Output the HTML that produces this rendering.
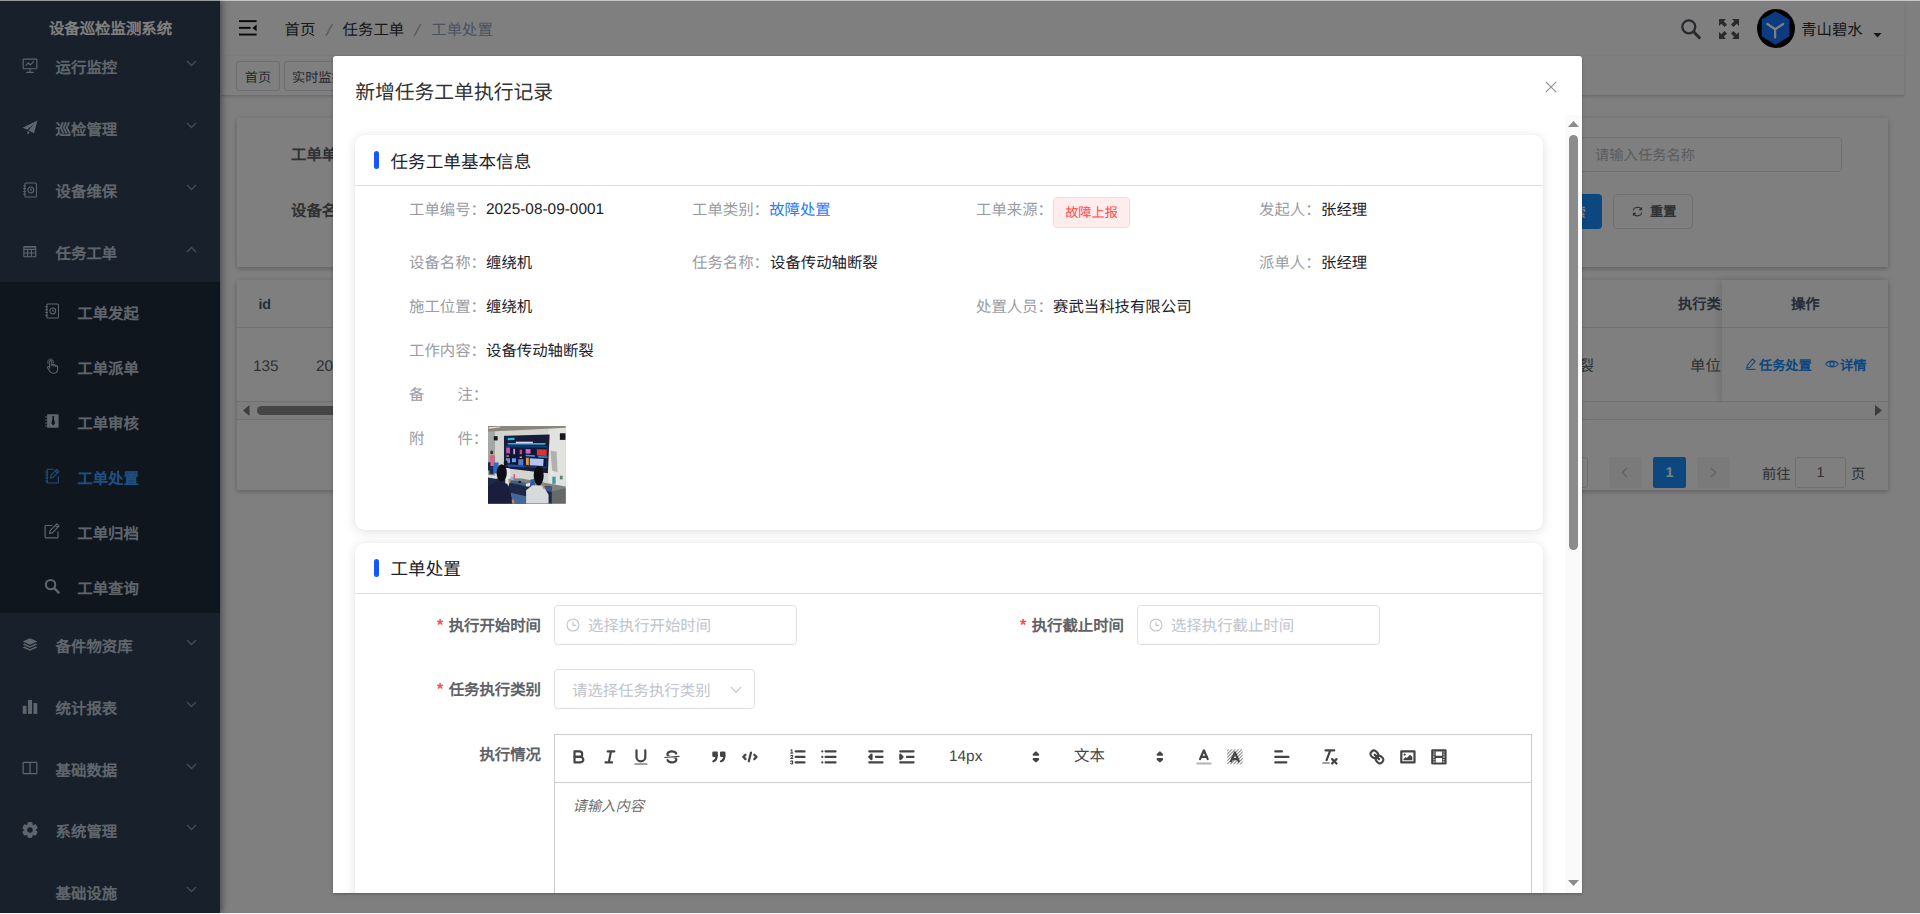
<!DOCTYPE html>
<html lang="zh-CN">
<head>
<meta charset="utf-8">
<title>设备巡检监测系统</title>
<style>
*{box-sizing:border-box;margin:0;padding:0}
html,body{width:1920px;height:914px;overflow:hidden;background:#fff}
body{font-family:"Liberation Sans",sans-serif;font-size:15.4px;color:#303133;position:relative;text-rendering:geometricPrecision}
.abs{position:absolute}
svg{display:block;overflow:visible}
.t{position:absolute;white-space:nowrap;line-height:20px;height:20px;margin-top:1px}
/* ---------- sidebar ---------- */
#side{position:absolute;left:0;top:0;width:220px;height:914px;background:#304156;box-shadow:2px 0 7px rgba(0,21,41,.45);overflow:hidden;z-index:2}
#side .logo{position:absolute;left:0;top:20.2px;width:221px;text-align:center;color:#fff;font-weight:700;font-size:15.4px;line-height:20px}
#side .mi{position:absolute;left:0;width:221px;height:62px;color:#bfcbd9;font-size:15.4px;font-weight:700}
#side .mi .tx{position:absolute;left:55.6px;top:22.7px;font-size:15.4px;line-height:20px;white-space:nowrap}
#side .mi .ic{position:absolute;left:21.5px;top:22px;width:16px;height:16px}
#side .mi .ar{position:absolute;left:186px;top:24px;width:11px;height:7px}
#side .sub{position:absolute;left:0;top:282px;width:221px;height:331px;background:#1f2d3d}
#side .si{position:absolute;left:0;width:221px;height:55px;color:#bfcbd9;font-size:15.4px;font-weight:700}
#side .si .tx{position:absolute;left:77.3px;top:19.7px;font-size:15.4px;line-height:20px;white-space:nowrap}
#side .si .ic{position:absolute;left:44px;top:17px;width:16px;height:16px}
#side .si.on{color:#409eff}
/* ---------- navbar ---------- */
#nav{position:absolute;left:221px;top:0;width:1683px;height:56px;background:#fff;box-shadow:0 1px 4px rgba(0,21,41,.08)}
#tags{position:absolute;left:221px;top:56px;width:1683px;height:40px;background:#fff;border-bottom:1px solid #d8dce5;box-shadow:0 1px 3px 0 rgba(0,0,0,.12),0 0 3px 0 rgba(0,0,0,.04)}
.tag{position:absolute;top:5px;height:30px;border:1px solid #d8dce5;border-radius:3px;font-size:13.2px;line-height:31px;color:#495060;padding:0 6.3px;white-space:nowrap;background:#fff}
#page .t{margin-top:2px}
.card{position:absolute;background:#fff;box-shadow:0 2px 5px 0 rgba(0,0,0,.2),0 0 7px 0 rgba(0,0,0,.08)}
/* ---------- overlay + dialog ---------- */
#mask{position:absolute;left:0;top:0;width:1920px;height:914px;background:rgba(0,0,0,.5);z-index:5}
#dlg{position:absolute;left:333px;top:56px;width:1249px;height:837px;background:#fff;border-radius:3px 3px 0 0;box-shadow:0 1px 3px rgba(0,0,0,.3);z-index:6;overflow:hidden}
.sec{position:absolute;left:22px;width:1188px;background:#fff;border-radius:9px;box-shadow:0 2px 12px 0 rgba(0,0,0,.12),0 0 2px rgba(0,0,0,.05)}
.sec .bar{position:absolute;left:18.8px;width:5px;height:18px;border-radius:2.5px;background:#1557ff;margin-top:-1px}
.sec .ttl{position:absolute;left:35.5px;margin-top:.5px;font-size:17.6px;line-height:24px;color:#1f2329;white-space:nowrap}
.sec .hr{position:absolute;left:0;width:1188px;height:1px;background:#dedfe2}
.lb,.vl,.lk{margin-top:2px}
.lb{color:#999ca3}
.vl{color:#1d2129}
.lk{color:#2a7afb}
.fl{position:absolute;font-weight:700;color:#606266;line-height:20px;text-align:right;white-space:nowrap;width:200px}
.fl{margin-top:1.6px}
.fl i{display:inline-block;vertical-align:top;height:20px;color:#ff4949;font-style:normal;margin-right:5px;font-weight:700;font-size:16px;line-height:20px;position:relative;top:-.6px;left:-.5px}
.inp{position:absolute;height:40px;border:1px solid #dcdfe6;border-radius:4px;background:#fff;color:#c0c4cc;line-height:38px;white-space:nowrap}
</style>
</head>
<body>

<!-- ================= BACKGROUND PAGE ================= -->
<div id="nav">
  <svg class="abs" style="left:18.3px;top:20.2px;width:18px;height:16px" viewBox="0 0 18 16"><g fill="#111"><rect x="0" y="0.2" width="17.6" height="1.9"/><rect x="0" y="6.9" width="11.6" height="1.9"/><rect x="0" y="13.6" width="17.6" height="1.9"/><path d="M17.6 4.6 V11.2 L13.4 7.9 Z"/></g></svg>
  <span class="t" style="left:63.6px;top:20px;font-size:15.4px;color:#303133">首页</span>
  <svg class="abs" style="left:0;top:0;width:300px;height:56px" viewBox="0 0 300 56"><path d="M105 35.9 L111.5 23.8 M193.2 35.9 L199.7 23.8" stroke="#b4b8c0" stroke-width="1.5" fill="none"/></svg>
  <span class="t" style="left:121.6px;top:20px;font-size:15.4px;color:#303133">任务工单</span>
  
  <span class="t" style="left:210.3px;top:20px;font-size:15.4px;color:#97a8be">工单处置</span>
  <!-- right menu -->
  <svg class="abs" style="left:1459px;top:18px;width:22px;height:23px" viewBox="0 0 22 23"><circle cx="8.8" cy="8.8" r="6.5" fill="none" stroke="#50545c" stroke-width="2.3"/><path d="M13.6 13.8 L19.3 19.6" stroke="#50545c" stroke-width="3" stroke-linecap="round"/></svg>
  <svg class="abs" style="left:1498px;top:19px;width:20px;height:20px" viewBox="0 0 20 20"><g fill="#50545c"><path d="M0 0 H7 L4.7 2.3 L8 5.6 L5.6 8 L2.3 4.7 L0 7 Z"/><path d="M20 0 V7 L17.7 4.7 L14.4 8 L12 5.6 L15.3 2.3 L13 0 Z"/><path d="M0 20 V13 L2.3 15.3 L5.6 12 L8 14.4 L4.7 17.7 L7 20 Z"/><path d="M20 20 H13 L15.3 17.7 L12 14.4 L14.4 12 L17.7 15.3 L20 13 Z"/></g></svg>
  <svg class="abs" style="left:1536px;top:8.6px;width:38px;height:39px" viewBox="0 0 39 39" preserveAspectRatio="none"><circle cx="19.5" cy="19.5" r="19.5" fill="#000"/><path d="M19 2.4 L33.4 10.6 V27.2 L19 35.8 L4.8 27.2 V10.6 Z" fill="#1878ff"/><path d="M18.6 28.6 V20.3 M18.6 20.3 L10.6 15 M18.6 20.3 L26.8 15" stroke="#fff" stroke-width="2.3" fill="none" stroke-linecap="round"/></svg>
  <span class="t" style="left:1580.2px;top:20.3px;font-size:15.4px;color:#303133">青山碧水</span>
  <svg class="abs" style="left:1652px;top:33.4px;width:9px;height:5px" viewBox="0 0 9 5"><path d="M0.5 0 H8.5 L4.5 4.6 Z" fill="#303133"/></svg>
</div>
<div id="tags">
  <div class="tag" style="left:15.3px;padding:0 7.6px 0 7.5px">首页</div>
  <div class="tag" style="left:63px;padding-left:7px">实时监控</div>
</div>
<div id="page">
  <!-- search card -->
  <div class="card" style="left:237px;top:118px;width:1651px;height:149px">
    <span class="t" style="left:54px;top:26px;font-weight:700;color:#606266">工单单号</span>
    <span class="t" style="left:54px;top:82px;font-weight:700;color:#606266">设备名称</span>
    <div class="abs" style="left:1320px;top:19px;width:285px;height:35px;border:1px solid #dcdfe6;border-radius:4px"></div>
    <span class="t" style="left:1358px;top:25.8px;font-size:14.3px;color:#b4b8bf">请输入任务名称</span>
    <div class="abs" style="left:1280px;top:76px;width:85px;height:35px;background:#1890ff;border-radius:4px"></div>
    <span class="t" style="left:1322px;top:83px;font-size:13.2px;color:#fff;font-weight:700">搜索</span>
    <div class="abs" style="left:1376px;top:76px;width:80px;height:35px;border:1px solid #dcdfe6;border-radius:4px;background:#fff"></div>
    <svg class="abs" style="left:1395px;top:88px;width:11px;height:11px" viewBox="0 0 11 11"><g fill="none" stroke="#606266" stroke-width="1.1"><path d="M1.2 4.4 A4.5 4.5 0 0 1 9.4 3.4 M9.8 6.6 A4.5 4.5 0 0 1 1.6 7.6"/><path d="M9.6 1.2 V3.6 H7.2 M1.4 9.8 V7.4 H3.8"/></g></svg>
    <span class="t" style="left:1413px;top:82.3px;font-size:13.2px;color:#606266;font-weight:700">重置</span>
  </div>
  <!-- table card -->
  <div class="card" style="left:237px;top:280px;width:1651px;height:210px">
    <div class="abs" style="left:0;top:47px;width:1651px;height:1px;background:#dfe6ec"></div>
    <span class="t" style="left:21.4px;top:13.2px;font-size:14.3px;font-weight:700;color:#515a6e">id</span>
    <span class="t" style="left:1441px;top:13px;font-size:14.3px;font-weight:700;color:#515a6e">执行类别</span>
    <span class="t" style="left:16px;top:74.6px;font-size:15.4px;color:#606266">135</span>
    <span class="t" style="left:79px;top:74.6px;font-size:15.4px;color:#606266">2025</span>
    <span class="t" style="left:1326px;top:75px;font-size:15.4px;color:#606266">断裂</span>
    <span class="t" style="left:1453px;top:75px;font-size:15.4px;color:#606266">单位</span>
    <div class="abs" style="left:0;top:121px;width:1651px;height:1px;background:#dfe6ec"></div>
    <!-- fixed right col -->
    <div class="abs" style="left:1485px;top:0;width:166px;height:122px;background:#fff;box-shadow:-3px 0 8px rgba(0,0,0,.12);border-bottom:1px solid #dfe6ec"></div>
    <div class="abs" style="left:1485px;top:47px;width:166px;height:1px;background:#dfe6ec"></div>
    <span class="t" style="left:1554px;top:13px;font-size:14.3px;font-weight:700;color:#515a6e">操作</span>
    <svg class="abs" style="left:1508px;top:78px;width:12px;height:12px" viewBox="0 0 12 12"><g fill="none" stroke="#1890ff" stroke-width="1.1"><path d="M7.6 1 L10 3.4 L4.6 9.6 L1.8 10 L2.4 7.2 Z"/><path d="M1.2 11.4 H10.6"/></g></svg>
    <span class="t" style="left:1522px;top:74px;font-size:13.2px;color:#1890ff;font-weight:700">任务处置</span>
    <svg class="abs" style="left:1588px;top:79px;width:14px;height:10px" viewBox="0 0 14 10"><g fill="none" stroke="#1890ff" stroke-width="1.1"><path d="M0.8 5 C3 1.2 11 1.2 13.2 5 C11 8.8 3 8.8 0.8 5 Z"/><circle cx="7" cy="5" r="2.1"/></g></svg>
    <span class="t" style="left:1603px;top:74px;font-size:13.2px;color:#1890ff;font-weight:700">详情</span>
    <!-- h scrollbar -->
    <div class="abs" style="left:0;top:122px;width:1651px;height:17px;background:#fbfbfb"></div>
    <svg class="abs" style="left:5.5px;top:125px;width:6.5px;height:11px" viewBox="0 0 6 9" preserveAspectRatio="none"><path d="M6 0 V9 L0 4.5 Z" fill="#787878"/></svg>
    <div class="abs" style="left:20px;top:126px;width:1200px;height:9px;border-radius:5px;background:#8a8a8a"></div>
    <svg class="abs" style="left:1638px;top:125px;width:7px;height:11px" viewBox="0 0 7 11"><path d="M0 0 V11 L7 5.5 Z" fill="#787878"/></svg>
    <div class="abs" style="left:0;top:139px;width:1651px;height:1px;background:#dfe6ec"></div>
    <!-- pagination -->
    <div class="abs" style="left:1269px;top:177px;width:82px;height:31px;border:1px solid #dcdfe6;border-radius:3px"></div>
    <div class="abs" style="left:1372px;top:177px;width:33px;height:31px;background:#f4f4f5;border-radius:2px"></div>
    <svg class="abs" style="left:1384px;top:187px;width:7px;height:11px" viewBox="0 0 7 11"><path d="M6 1 L1.4 5.5 L6 10" fill="none" stroke="#c0c4cc" stroke-width="1.4"/></svg>
    <div class="abs" style="left:1416px;top:177px;width:33px;height:31px;background:#1890ff;border-radius:2px;color:#fff;font-weight:700;font-size:14.3px;text-align:center;line-height:33px">1</div>
    <div class="abs" style="left:1460px;top:177px;width:33px;height:31px;background:#f4f4f5;border-radius:2px"></div>
    <svg class="abs" style="left:1473px;top:187px;width:7px;height:11px" viewBox="0 0 7 11"><path d="M1 1 L5.6 5.5 L1 10" fill="none" stroke="#c0c4cc" stroke-width="1.4"/></svg>
    <span class="t" style="left:1525px;top:183px;font-size:14.3px;color:#606266">前往</span>
    <div class="abs" style="left:1558px;top:177px;width:51px;height:31px;border:1px solid #dcdfe6;border-radius:3px;text-align:center;line-height:31px;font-size:14.3px;color:#606266">1</div>
    <span class="t" style="left:1614px;top:183px;font-size:14.3px;color:#606266">页</span>
  </div>
</div>
<div id="side">
  <div class="logo">设备巡检监测系统</div>
  <div class="mi" style="top:36px"><svg class="ic" viewBox="0 0 17 17"><g fill="none" stroke="currentColor" stroke-width="1.2"><rect x="1.2" y="1.2" width="14.6" height="10.2" rx="0.8"/><path d="M4 8 L6.7 5.2 L8.8 7.3 L12.6 3.6"/><path d="M8.5 11.4 V15 M4.6 15.3 H12.4"/></g></svg><span class="tx">运行监控</span><svg class="ar" viewBox="0 0 11 7"><path d="M1 1 L5.5 5.5 L10 1" fill="none" stroke="#8b97a6" stroke-width="1.3"/></svg></div>
  <div class="mi" style="top:98px"><svg class="ic" viewBox="0 0 17 17"><path d="M16.4 0.6 L0.6 8.2 L5.6 10.3 L12.6 4.2 L7 11.2 L12.8 14 Z M5.8 11.6 L5.8 15.8 L8.4 12.9 Z" fill="currentColor"/></svg><span class="tx">巡检管理</span><svg class="ar" viewBox="0 0 11 7"><path d="M1 1 L5.5 5.5 L10 1" fill="none" stroke="#8b97a6" stroke-width="1.3"/></svg></div>
  <div class="mi" style="top:160px"><svg class="ic" viewBox="0 0 17 17"><g fill="none" stroke="currentColor" stroke-width="1.1"><rect x="3" y="1" width="12.4" height="15" rx="1.2"/><circle cx="9.3" cy="8.5" r="3.1"/><path d="M9.3 6.8 V8.6 H10.8"/><path d="M1.3 4 H4.2 M1.3 7 H4.2 M1.3 10 H4.2 M1.3 13 H4.2" stroke-width="1"/></g></svg><span class="tx">设备维保</span><svg class="ar" viewBox="0 0 11 7"><path d="M1 1 L5.5 5.5 L10 1" fill="none" stroke="#8b97a6" stroke-width="1.3"/></svg></div>
  <div class="mi" style="top:222px"><svg class="ic" viewBox="0 0 17 17"><g fill="none" stroke="currentColor" stroke-width="1.2"><rect x="2" y="2.6" width="12.6" height="11" rx="0.8"/><path d="M2 5.7 H14.6 M2 9.6 H14.6 M5.95 5.7 V13.6 M10.05 5.7 V13.6"/><path d="M2 3.2 H14.6" stroke-width="1.3"/></g></svg><span class="tx">任务工单</span><svg class="ar" viewBox="0 0 11 7"><path d="M1 6 L5.5 1.5 L10 6" fill="none" stroke="#8b97a6" stroke-width="1.3"/></svg></div>
  <div class="sub"></div>
  <div class="si" style="top:285.5px"><svg class="ic" viewBox="0 0 17 17"><g fill="none" stroke="currentColor" stroke-width="1.1"><rect x="3" y="1" width="12.4" height="15" rx="1.2"/><circle cx="9.3" cy="8.5" r="3.1"/><path d="M9.3 6.8 V8.6 H10.8"/><path d="M1.3 4 H4.2 M1.3 7 H4.2 M1.3 10 H4.2 M1.3 13 H4.2" stroke-width="1"/></g></svg><span class="tx">工单发起</span></div>
  <div class="si" style="top:340.5px"><svg class="ic" viewBox="0 0 16 16"><g fill="none" stroke="currentColor" stroke-width="1.05" stroke-linecap="round" stroke-linejoin="round"><path d="M5.6 9.2 V3.6 a1.1 1.1 0 0 1 2.2 0 V7.6"/><path d="M7.8 7.2 a1 1 0 0 1 2 0 V8.2 M9.8 7.8 a1 1 0 0 1 2 0 V8.8 M11.8 8.6 a0.9 0.9 0 0 1 1.8 0 V11.6 c0 2.2 -1.4 3.6 -3.6 3.6 H9 c-1.6 0 -2.6 -0.8 -3.4 -2.2 L3.6 9.8 c-0.5 -1 0.8 -1.8 1.5 -0.9 L5.6 10"/><path d="M3.9 5.4 a3 3 0 1 1 5.6 -0.6" stroke-width="0.9"/></g></svg><span class="tx">工单派单</span></div>
  <div class="si" style="top:395.5px"><svg class="ic" viewBox="0 0 16 16"><path d="M3.2 1.2 H13.6 a1 1 0 0 1 1 1 V13.8 a1 1 0 0 1 -1 1 H3.2 Z" fill="currentColor"/><path d="M1.2 4 H4 M1.2 7 H4 M1.2 10 H4 M1.2 13 H4" stroke="currentColor" stroke-width="1.1"/><path d="M8 3.2 H10.4 L9.9 5 L11 10.6 L9.2 12.6 L7.4 10.6 L8.5 5 Z" fill="#1f2d3d"/></svg><span class="tx">工单审核</span></div>
  <div class="si on" style="top:450.5px"><svg class="ic" viewBox="0 0 16 16"><g fill="none" stroke="currentColor" stroke-width="1.1" stroke-linejoin="round"><path d="M14.4 8.6 V14 a1 1 0 0 1 -1 1 H3.2 V1.2 H9.8"/><path d="M1.2 4 H4.2 M1.2 7 H4.2 M1.2 10 H4.2 M1.2 13 H4.2" stroke-width="1"/><path d="M12.6 1.4 L14.8 3.6 L9 9.4 L6.4 10 L7 7.2 Z M11.3 2.8 L13.4 4.9"/></g></svg><span class="tx">工单处置</span></div>
  <div class="si" style="top:505.5px"><svg class="ic" viewBox="0 0 16 16"><g fill="none" stroke="currentColor" stroke-width="1.2" stroke-linejoin="round"><path d="M14 8.4 V14 a0.9 0.9 0 0 1 -0.9 0.9 H2 a0.9 0.9 0 0 1 -0.9 -0.9 V3.4 a0.9 0.9 0 0 1 0.9 -0.9 H8.4"/><path d="M12.8 0.9 L15 3.1 L8.4 9.8 L5.6 10.4 L6.2 7.6 Z M11.4 2.3 L13.6 4.5"/></g></svg><span class="tx">工单归档</span></div>
  <div class="si" style="top:560.5px"><svg class="ic" viewBox="0 0 16 16"><circle cx="6.6" cy="6.6" r="4.7" fill="none" stroke="currentColor" stroke-width="2"/><path d="M10.2 10.2 L14.6 14.6" stroke="currentColor" stroke-width="2.4" stroke-linecap="round"/></svg><span class="tx">工单查询</span></div>
  <div class="mi" style="top:615px"><svg class="ic" viewBox="0 0 17 17"><g fill="currentColor"><path d="M8.5 1.2 L16.3 4.7 L8.5 8.2 L0.7 4.7 Z"/><path d="M2.6 7 L0.7 7.9 L8.5 11.4 L16.3 7.9 L14.4 7 L8.5 9.7 Z"/><path d="M2.6 10.2 L0.7 11.1 L8.5 14.6 L16.3 11.1 L14.4 10.2 L8.5 12.9 Z"/></g></svg><span class="tx">备件物资库</span><svg class="ar" viewBox="0 0 11 7"><path d="M1 1 L5.5 5.5 L10 1" fill="none" stroke="#8b97a6" stroke-width="1.3"/></svg></div>
  <div class="mi" style="top:677px"><svg class="ic" viewBox="0 0 17 17"><g fill="currentColor"><rect x="0.8" y="7.2" width="4" height="8.6"/><rect x="6.4" y="1" width="4.2" height="14.8"/><rect x="12.2" y="4.4" width="4" height="11.4"/></g></svg><span class="tx">统计报表</span><svg class="ar" viewBox="0 0 11 7"><path d="M1 1 L5.5 5.5 L10 1" fill="none" stroke="#8b97a6" stroke-width="1.3"/></svg></div>
  <div class="mi" style="top:739px"><svg class="ic" style="margin-top:-1.3px" viewBox="0 0 17 17"><g fill="none" stroke="currentColor" stroke-width="1.3"><rect x="1.2" y="2.6" width="14.6" height="11.8" rx="0.8"/><path d="M8.5 2.6 V14.4"/></g></svg><span class="tx">基础数据</span><svg class="ar" viewBox="0 0 11 7"><path d="M1 1 L5.5 5.5 L10 1" fill="none" stroke="#8b97a6" stroke-width="1.3"/></svg></div>
  <div class="mi" style="top:800px"><svg class="ic" viewBox="0 0 17 17"><g fill="currentColor"><circle cx="8.5" cy="8.5" r="6"/><rect x="5.7" y="0.1" width="5.6" height="5" rx="2" transform="rotate(0 8.5 8.5)"/><rect x="5.7" y="0.1" width="5.6" height="5" rx="2" transform="rotate(60 8.5 8.5)"/><rect x="5.7" y="0.1" width="5.6" height="5" rx="2" transform="rotate(120 8.5 8.5)"/><rect x="5.7" y="0.1" width="5.6" height="5" rx="2" transform="rotate(180 8.5 8.5)"/><rect x="5.7" y="0.1" width="5.6" height="5" rx="2" transform="rotate(240 8.5 8.5)"/><rect x="5.7" y="0.1" width="5.6" height="5" rx="2" transform="rotate(300 8.5 8.5)"/></g><circle cx="8.5" cy="8.5" r="2.9" fill="#304156"/></svg><span class="tx">系统管理</span><svg class="ar" viewBox="0 0 11 7"><path d="M1 1 L5.5 5.5 L10 1" fill="none" stroke="#8b97a6" stroke-width="1.3"/></svg></div>
  <div class="mi" style="top:862px"><span class="tx">基础设施</span><svg class="ar" viewBox="0 0 11 7"><path d="M1 1 L5.5 5.5 L10 1" fill="none" stroke="#8b97a6" stroke-width="1.3"/></svg></div>
</div>

<!-- ================= OVERLAY ================= -->
<div id="mask"></div>

<!-- ================= DIALOG ================= -->
<div id="dlg">
<div class="abs" style="left:-333px;top:-56px;width:1920px;height:914px">
<span class="t" style="left:355.2px;top:78px;font-size:19.8px;line-height:28px;height:28px;color:#303133">新增任务工单执行记录</span>
<svg class="abs" style="left:1545px;top:81px;width:12px;height:12px" viewBox="0 0 12 12"><path d="M0.8 0.8 L11.2 11.2 M11.2 0.8 L0.8 11.2" stroke="#909399" stroke-width="1.2" fill="none"/></svg>
<!--SEC1-->
<div class="sec" style="left:355px;top:135px;height:395px"><div class="bar" style="top:17px"></div><div class="ttl" style="top:14px">任务工单基本信息</div><div class="hr" style="top:50px"></div></div>
<span class="t lb" style="left:409px;top:199px;">工单编号：</span>
<span class="t lb" style="left:692px;top:199px;">工单类别：</span>
<span class="t lb" style="left:976px;top:199px;">工单来源：</span>
<span class="t lb" style="left:1259px;top:199px;">发起人：</span>
<span class="t lb" style="left:409px;top:252px;">设备名称：</span>
<span class="t lb" style="left:692px;top:252px;">任务名称：</span>
<span class="t lb" style="left:1259px;top:252px;">派单人：</span>
<span class="t lb" style="left:409px;top:296px;">施工位置：</span>
<span class="t lb" style="left:976px;top:296px;">处置人员：</span>
<span class="t lb" style="left:409px;top:340px;">工作内容：</span>
<span class="t lb" style="left:409px;top:384px;">备</span>
<span class="t lb" style="left:457.4px;top:384px;">注：</span>
<span class="t lb" style="left:409px;top:428px;">附</span>
<span class="t lb" style="left:457.4px;top:428px;">件：</span>
<span class="t vl" style="left:486px;top:198px;">2025-08-09-0001</span>
<span class="t lk" style="left:769.2px;top:199px;">故障处置</span>
<span class="t vl" style="left:1321px;top:199px;">张经理</span>
<span class="t vl" style="left:486px;top:252px;">缠绕机</span>
<span class="t vl" style="left:770px;top:252px;">设备传动轴断裂</span>
<span class="t vl" style="left:1321px;top:252px;">张经理</span>
<span class="t vl" style="left:486px;top:296px;">缠绕机</span>
<span class="t vl" style="left:1053px;top:296px;">赛武当科技有限公司</span>
<span class="t vl" style="left:486px;top:340px;">设备传动轴断裂</span>
<div class="abs" style="left:1053px;top:197px;width:77px;height:31px;border:1px solid #ffd6d6;background:#ffeded;border-radius:4px;color:#ff4949;font-size:13.2px;line-height:29px;text-align:center;white-space:nowrap">故障上报</div>
<div id="photo" class="abs" style="left:488px;top:426px;width:78px;height:78px;background:#9aa0a6;overflow:hidden"><svg viewBox="0 0 78 78" width="78" height="78" style="display:block"><defs><filter id="pb" x="-5%" y="-5%" width="110%" height="110%"><feGaussianBlur stdDeviation="0.45"/></filter><linearGradient id="scr" x1="0" y1="0" x2="1" y2="1"><stop offset="0" stop-color="#16203f"/><stop offset="1" stop-color="#1d1b2c"/></linearGradient></defs><g filter="url(#pb)"><rect x="-2" y="-2" width="82" height="82" fill="#d2d4d0"/><rect x="-2" y="-2" width="9" height="60" fill="#a3a7a6"/><polygon points="60.56,3.14 77.61,1.35 77.61,60.56 60.56,56.97" fill="#e2e3df"/><polygon points="0,0 77.61,0 77.61,1.79 24.67,4.49 0,5.38" fill="#8a8679"/><polygon points="0.45,1.35 12.11,0.45 12.56,1.35 0.63,2.69" fill="#e8e8e0"/><polygon points="0,51.59 33.64,52.49 60.56,57.42 77.61,60.56 77.61,77.61 0,77.61" fill="#7e837e"/><polygon points="60.56,65.94 77.61,62.35 77.61,77.61 62.35,77.61" fill="#656a68"/><polygon points="15.97,9.87 61.64,8.52 59.84,47.28 15.97,41.9" fill="url(#scr)"/><polygon points="17.94,19.29 59.66,19.74 58.77,42.62 17.94,39.92" fill="#17386f"/><polygon points="18.57,21.26 58.94,21.8 58.23,40.82 18.57,38.31" fill="#10183a"/><polygon points="19.29,17.05 57.87,17.05 56.97,18.84 20.19,18.57" fill="#27b0e6"/><polygon points="19.74,12.11 26.47,11.66 26.47,14.09 19.74,14.35" fill="#2fb6e0"/><polygon points="27.81,15.7 44.86,15.7 44.86,17.32 27.81,17.32" fill="#d9d7f0"/><polygon points="18.21,21.53 21.98,21.53 21.98,27.36 18.21,27.36" fill="#d24aa0"/><polygon points="25.39,22.88 27.01,22.88 27.01,28.26 25.39,28.26" fill="#e5a0d8"/><polygon points="31.67,23.6 34,23.6 34,28.26 31.67,28.26" fill="#e0407a"/><polygon points="37.68,22.88 42.62,23.33 42.44,27.81 37.68,27.54" fill="#e45ec4"/><polygon points="48.9,23.33 58.77,23.6 58.59,30.06 48.9,29.61" fill="#d8342f"/><polygon points="37.68,28.71 46.92,29.16 46.92,30.77 37.68,30.24" fill="#2aa5e2"/><polygon points="50.24,30.06 59.48,30.5 59.48,31.85 50.24,31.49" fill="#2aa5e2"/><polygon points="41.72,32.3 55.63,32.93 55.18,39.92 41.72,39.21" fill="#b9c4ee"/><polygon points="37.95,31.67 40.82,31.85 40.82,39.21 37.95,38.85" fill="#e29a3a"/><polygon points="18.57,29.34 20.9,29.34 20.9,30.77 18.57,30.77" fill="#e29a3a"/><polygon points="31.67,30.5 34,30.5 34,32.03 31.67,32.03" fill="#e29a3a"/><polygon points="17.94,32.3 21.98,32.3 21.98,37.23 17.94,37.23" fill="#6f93d6"/><polygon points="23.95,32.3 27.9,32.3 27.9,36.16 23.95,36.16" fill="#6aa5e4"/><polygon points="30.24,33.2 35.26,33.2 35.26,39.48 30.24,39.03" fill="#5b78c4"/><polygon points="20.19,38.58 36.34,39.48 36.34,41.27 20.19,40.64" fill="#1e4fb0"/><rect x="5.83" y="10.14" width="3.8" height="4.3" fill="#17181c"/><rect x="71.86" y="7.27" width="5.6" height="6.6" fill="#15161a"/><polygon points="62.35,24.67 68.63,25.57 69.53,46.2 64.15,44.41" fill="#9b9c98" opacity=".7"/><rect x="64.33" y="50.69" width="3.3" height="7.2" fill="#3d97a6"/><rect x="71.86" y="49.79" width="2.8" height="3.6" fill="#5e7f74"/><rect x="1.53" y="29.16" width="5.6" height="11.2" rx="1.5" fill="#c86f8a"/><ellipse cx="3.68" cy="26.47" rx="1.4" ry="1.9" fill="#3a2c28"/><rect x="1.35" y="39.92" width="4.3" height="8.4" fill="#1f2c56"/><rect x="5.83" y="36.52" width="4.8" height="11" fill="#2f6cc0"/><rect x="0" y="36.34" width="2.4" height="8" fill="#22253a"/><polygon points="0,50.69 24.67,55.18 39.92,59.66 63.7,60.56 63.7,77.61 0,77.61" fill="#1b2944"/><polygon points="21.98,53.83 40.82,57.42 39.03,60.56 22.88,56.97" fill="#3f5f90"/><polygon points="22.88,66.84 39.03,70.43 38.13,77.61 22.88,77.61" fill="#44689a"/><polygon points="55.18,60.56 63.7,61.01 63.7,65.94 56.07,64.6" fill="#3a5a8c"/><polygon points="0,48.9 8.52,50.24 8.97,52.93 0,51.59" fill="#dfe3e8"/><polygon points="17.94,41.72 21.8,42.62 22.88,52.49 20.19,60.56 17.05,59.66" fill="#e4e6e6"/><ellipse cx="17.67" cy="36.87" rx="2" ry="2.6" fill="#14151a"/><polygon points="20.19,52.93 22.88,52.49 22.43,56.97 20.64,56.52" fill="#b98a6c"/><rect x="22.7" y="50.69" width="3" height="3.6" fill="#7fb7e8"/><rect x="25.57" y="48.18" width="1.4" height="4.6" fill="#e2505a"/><ellipse cx="31.67" cy="56.07" rx="1.5" ry="1.2" fill="#18203a"/><polygon points="42.62,53.38 46.65,52.93 46.92,59.66 41.72,60.11" fill="#3656a8"/><polygon points="37.68,57.87 42.17,56.97 41.72,60.56 38.13,60.56" fill="#e9eaee"/><polygon points="0,60.56 9.42,55.18 19.29,57.87 24.67,74.91 24.67,77.61 0,77.61" fill="#1a1f3e"/><ellipse cx="13.73" cy="46.92" rx="5.1" ry="8.6" fill="#101114"/><polygon points="23.78,73.12 26.02,74.02 26.47,77.61 23.95,77.61" fill="#c08a5e"/><polygon points="38.13,64.15 44.41,59.21 55.18,59.66 60.56,68.63 60.56,77.61 38.13,77.61" fill="#d6dadb"/><ellipse cx="50.69" cy="49.61" rx="5" ry="9.6" fill="#0f1013"/><polygon points="54.46,56.97 56.52,57.42 56.52,63.25 54.73,61.91" fill="#b8825c"/></g></svg></div>
<!--SEC2-->
<div class="sec" style="left:355px;top:543px;height:420px"><div class="bar" style="top:17px"></div><div class="ttl" style="top:13px">工单处置</div><div class="hr" style="top:50px"></div></div>
<span class="fl" style="left:341px;top:615px"><i>*</i>执行开始时间</span>
<span class="fl" style="left:924px;top:615px"><i>*</i>执行截止时间</span>
<span class="fl" style="left:341px;top:679px"><i>*</i>任务执行类别</span>
<span class="fl" style="left:341px;top:744px">执行情况</span>
<div class="inp" style="left:554px;top:605px;width:243px"></div>
<svg class="abs" style="left:566px;top:618px;width:14px;height:14px" viewBox="0 0 14 14"><g fill="none" stroke="#c0c4cc" stroke-width="1.1"><circle cx="7" cy="7" r="6"/><path d="M7 3.6 V7.4 H10"/></g></svg>
<span class="t " style="left:588px;top:615px;color:#c0c4cc;margin-top:2px">选择执行开始时间</span>
<div class="inp" style="left:1137px;top:605px;width:243px"></div>
<svg class="abs" style="left:1149px;top:618px;width:14px;height:14px" viewBox="0 0 14 14"><g fill="none" stroke="#c0c4cc" stroke-width="1.1"><circle cx="7" cy="7" r="6"/><path d="M7 3.6 V7.4 H10"/></g></svg>
<span class="t " style="left:1171px;top:615px;color:#c0c4cc;margin-top:2px">选择执行截止时间</span>
<div class="inp" style="left:554px;top:669px;width:201px"></div>
<span class="t " style="left:572px;top:680px;color:#c0c4cc;margin-top:2px">请选择任务执行类别</span>
<svg class="abs" style="left:730px;top:686px;width:12px;height:8px" viewBox="0 0 12 8"><path d="M1 1.2 L6 6.4 L11 1.2" fill="none" stroke="#c0c4cc" stroke-width="1.2"/></svg>
<div class="abs" style="left:554px;top:734px;width:978px;height:49px;border:1px solid #ccc;background:#fff"></div>
<div class="abs" style="left:554px;top:782px;width:978px;height:200px;border:1px solid #ccc;background:#fff"></div>
<span class="t " style="left:572.5px;top:796px;color:rgba(0,0,0,.6);font-style:italic;font-size:14.3px">请输入内容</span>
<svg class="abs" style="left:569.1px;top:747.1px;width:19.8px;height:19.8px" viewBox="0 0 18 18"><path fill="none" stroke="#444" stroke-width="2" stroke-linecap="round" stroke-linejoin="round" d="M5,4H9.5A2.5,2.5,0,0,1,12,6.5v0A2.5,2.5,0,0,1,9.5,9H5V4Z"/><path fill="none" stroke="#444" stroke-width="2" stroke-linecap="round" stroke-linejoin="round" d="M5,9h5.5A2.5,2.5,0,0,1,13,11.5v0A2.5,2.5,0,0,1,10.5,14H5V9Z"/></svg>
<svg class="abs" style="left:600.4px;top:747.1px;width:19.8px;height:19.8px" viewBox="0 0 18 18"><path fill="none" stroke="#444" stroke-width="2" stroke-linecap="round" stroke-linejoin="round" d="M7 4H13M5 14H11M8 14L10 4"/></svg>
<svg class="abs" style="left:631.1px;top:747.1px;width:19.8px;height:19.8px" viewBox="0 0 18 18"><path fill="none" stroke="#444" stroke-width="2" stroke-linecap="round" stroke-linejoin="round" d="M5,3V9a4.012,4.012,0,0,0,4,4H9a4.012,4.012,0,0,0,4-4V3"/><rect fill="#444" height="1" rx="0.5" ry="0.5" width="12" x="3" y="15"/></svg>
<svg class="abs" style="left:662.1px;top:747.1px;width:19.8px;height:19.8px" viewBox="0 0 18 18"><line fill="none" stroke="#444" stroke-width="1" stroke-linecap="round" stroke-linejoin="round" x1="15.5" x2="2.5" y1="8.5" y2="9.5"/><path fill="#444" d="M9.007,8C6.542,7.791,6,7.519,6,6.5,6,5.792,7.283,5,9,5c1.571,0,2.765.679,2.969,1.309a1,1,0,0,0,1.9-.617C13.356,4.106,11.354,3,9,3,6.2,3,4,4.538,4,6.5a3.2,3.2,0,0,0,.5,1.843Z"/><path fill="#444" d="M8.984,10C11.457,10.208,12,10.479,12,11.5c0,0.708-1.283,1.5-3,1.5-1.571,0-2.765-.679-2.969-1.309a1,1,0,1,0-1.9.617C4.644,13.894,6.646,15,9,15c2.8,0,5-1.538,5-3.5a3.2,3.2,0,0,0-.5-1.843Z"/></svg>
<svg class="abs" style="left:709.1px;top:747.1px;width:19.8px;height:19.8px" viewBox="0 0 18 18"><rect fill="#444" stroke="#444" stroke-width="2" stroke-linecap="round" stroke-linejoin="round" height="3" width="3" x="4" y="5"/><rect fill="#444" stroke="#444" stroke-width="2" stroke-linecap="round" stroke-linejoin="round" height="3" width="3" x="11" y="5"/><path fill="#444" stroke="#444" stroke-width="2" stroke-linecap="round" stroke-linejoin="round" fill-rule="evenodd" d="M7,8c0,4.031-3,5-3,5"/><path fill="#444" stroke="#444" stroke-width="2" stroke-linecap="round" stroke-linejoin="round" fill-rule="evenodd" d="M14,8c0,4.031-3,5-3,5"/></svg>
<svg class="abs" style="left:740.1px;top:747.1px;width:19.8px;height:19.8px" viewBox="0 0 18 18"><polyline fill="none" stroke="#444" stroke-width="2" stroke-linecap="round" stroke-linejoin="round" points="5 7 3 9 5 11"/><polyline fill="none" stroke="#444" stroke-width="2" stroke-linecap="round" stroke-linejoin="round" points="13 7 15 9 13 11"/><line fill="none" stroke="#444" stroke-width="2" stroke-linecap="round" stroke-linejoin="round" x1="10" x2="8" y1="5" y2="13"/></svg>
<svg class="abs" style="left:788.1px;top:747.1px;width:19.8px;height:19.8px" viewBox="0 0 18 18"><path fill="none" stroke="#444" stroke-width="2" stroke-linecap="round" stroke-linejoin="round" d="M7 4H15M7 9H15M7 14H15"/><line fill="none" stroke="#444" stroke-width="1" stroke-linecap="round" stroke-linejoin="round" x1="2.5" x2="4.5" y1="5.5" y2="5.5"/><path fill="#444" d="M3.5,6A0.5,0.5,0,0,1,3,5.5V3.085l-0.276.138A0.5,0.5,0,0,1,2.053,3c-0.124-.247-0.023-0.324.224-0.447l1-.5A0.5,0.5,0,0,1,4,2.5v3A0.5,0.5,0,0,1,3.5,6Z"/><path fill="none" stroke="#444" stroke-width="1" stroke-linecap="round" stroke-linejoin="round" d="M4.5,10.5h-2c0-.234,1.85-1.076,1.85-2.234A0.959,0.959,0,0,0,2.5,8.156"/><path fill="none" stroke="#444" stroke-width="1" stroke-linecap="round" stroke-linejoin="round" d="M2.5,14.846a0.959,0.959,0,0,0,1.85-.109A0.7,0.7,0,0,0,3.75,14a0.688,0.688,0,0,0,.6-0.736,0.959,0.959,0,0,0-1.85-.109"/></svg>
<svg class="abs" style="left:819.1px;top:747.1px;width:19.8px;height:19.8px" viewBox="0 0 18 18"><path fill="none" stroke="#444" stroke-width="2" stroke-linecap="round" stroke-linejoin="round" d="M6 4H15M6 9H15M6 14H15M3 4H3M3 9H3M3 14H3"/></svg>
<svg class="abs" style="left:866.1px;top:747.1px;width:19.8px;height:19.8px" viewBox="0 0 18 18"><path fill="none" stroke="#444" stroke-width="2" stroke-linecap="round" stroke-linejoin="round" d="M3 14H15M3 4H15M9 9H15"/><polyline fill="none" stroke="#444" stroke-width="2" stroke-linecap="round" stroke-linejoin="round" points="5 7 5 11 3 9 5 7"/></svg>
<svg class="abs" style="left:897.1px;top:747.1px;width:19.8px;height:19.8px" viewBox="0 0 18 18"><path fill="none" stroke="#444" stroke-width="2" stroke-linecap="round" stroke-linejoin="round" d="M3 14H15M3 4H15M9 9H15"/><polyline fill="#444" stroke="#444" stroke-width="2" stroke-linecap="round" stroke-linejoin="round" points="3 7 3 11 5 9 3 7"/></svg>
<svg class="abs" style="left:1026.1px;top:747.1px;width:19.8px;height:19.8px" viewBox="0 0 18 18"><polygon fill="#444" stroke="#444" stroke-width="2" stroke-linecap="round" stroke-linejoin="round" points="7 11 9 13 11 11 7 11"/><polygon fill="#444" stroke="#444" stroke-width="2" stroke-linecap="round" stroke-linejoin="round" points="7 7 9 5 11 7 7 7"/></svg>
<svg class="abs" style="left:1150.1px;top:747.1px;width:19.8px;height:19.8px" viewBox="0 0 18 18"><polygon fill="#444" stroke="#444" stroke-width="2" stroke-linecap="round" stroke-linejoin="round" points="7 11 9 13 11 11 7 11"/><polygon fill="#444" stroke="#444" stroke-width="2" stroke-linecap="round" stroke-linejoin="round" points="7 7 9 5 11 7 7 7"/></svg>
<svg class="abs" style="left:1194.1px;top:747.1px;width:19.8px;height:19.8px" viewBox="0 0 18 18"><line fill="none" stroke="#444" stroke-width="2" stroke-linecap="round" stroke-linejoin="round" opacity="0.4" x1="3" x2="15" y1="15" y2="15"/><polyline fill="none" stroke="#444" stroke-width="2" stroke-linecap="round" stroke-linejoin="round" points="5.5 11 9 3 12.5 11"/><line fill="none" stroke="#444" stroke-width="2" stroke-linecap="round" stroke-linejoin="round" x1="11.63" x2="6.38" y1="9" y2="9"/></svg>
<svg class="abs" style="left:1225.1px;top:747.1px;width:19.8px;height:19.8px" viewBox="0 0 18 18"><clipPath id="hc"><rect x="2" y="2" width="14" height="14"/></clipPath><path clip-path="url(#hc)" d="M-10.5 16L3.5 2M-7.5 16L6.5 2M-4.5 16L9.5 2M-1.5 16L12.5 2M1.5 16L15.5 2M4.5 16L18.5 2M7.5 16L21.5 2M10.5 16L24.5 2M13.5 16L27.5 2M16.5 16L30.5 2" stroke="#444" stroke-width="1" opacity="0.6" fill="none"/><polyline fill="none" stroke="#444" stroke-width="2" stroke-linecap="round" stroke-linejoin="round" points="5.5 13 9 5 12.5 13"/><line fill="none" stroke="#444" stroke-width="2" stroke-linecap="round" stroke-linejoin="round" x1="11.63" x2="6.38" y1="11" y2="11"/></svg>
<svg class="abs" style="left:1272.3px;top:747.2px;width:19.8px;height:19.8px" viewBox="0 0 18 18"><path fill="none" stroke="#444" stroke-width="2" stroke-linecap="round" stroke-linejoin="round" d="M3 9H15M3 14H13M3 4H9"/></svg>
<svg class="abs" style="left:1320.1px;top:747.1px;width:19.8px;height:19.8px" viewBox="0 0 18 18"><path fill="none" stroke="#444" stroke-width="2" stroke-linecap="round" stroke-linejoin="round" d="M5 3H13M6 12L9.35 3M11 11L15 15M15 11L11 15"/><rect fill="#444" height="1" rx="0.5" ry="0.5" width="7" x="2" y="14"/></svg>
<svg class="abs" style="left:1367.1px;top:747.1px;width:19.8px;height:19.8px" viewBox="0 0 18 18"><line fill="none" stroke="#444" stroke-width="2" stroke-linecap="round" stroke-linejoin="round" x1="7" x2="11" y1="7" y2="11"/><path fill="none" stroke="#444" stroke-width="2" stroke-linecap="round" stroke-linejoin="round" d="M8.9,4.577a3.476,3.476,0,0,1,.36,4.679A3.476,3.476,0,0,1,4.577,8.9C3.185,7.5,2.035,6.4,4.217,4.217S7.5,3.185,8.9,4.577Z"/><path fill="none" stroke="#444" stroke-width="2" stroke-linecap="round" stroke-linejoin="round" d="M13.423,9.1a3.476,3.476,0,0,0-4.679-.36,3.476,3.476,0,0,0,.36,4.679c1.392,1.392,2.5,2.542,4.679.36S14.815,10.5,13.423,9.1Z"/></svg>
<svg class="abs" style="left:1398.1px;top:747.1px;width:19.8px;height:19.8px" viewBox="0 0 18 18"><rect fill="none" stroke="#444" stroke-width="2" stroke-linecap="round" stroke-linejoin="round" height="10" width="12" x="3" y="4"/><circle fill="#444" cx="6" cy="7" r="1"/><polyline fill="#444" points="5 12 5 11 7 9 8 10 11 7 13 9 13 12 5 12"/></svg>
<svg class="abs" style="left:1429.1px;top:747.1px;width:19.8px;height:19.8px" viewBox="0 0 18 18"><rect fill="none" stroke="#444" stroke-width="2" stroke-linecap="round" stroke-linejoin="round" height="12" width="12" x="3" y="3"/><rect fill="#444" height="12" width="1" x="5" y="3"/><rect fill="#444" height="12" width="1" x="12" y="3"/><rect fill="#444" height="2" width="8" x="5" y="8"/><rect fill="#444" height="1" width="3" x="3" y="5"/><rect fill="#444" height="1" width="3" x="3" y="7"/><rect fill="#444" height="1" width="3" x="3" y="10"/><rect fill="#444" height="1" width="3" x="3" y="12"/><rect fill="#444" height="1" width="3" x="12" y="5"/><rect fill="#444" height="1" width="3" x="12" y="7"/><rect fill="#444" height="1" width="3" x="12" y="10"/><rect fill="#444" height="1" width="3" x="12" y="12"/></svg>
<span class="t " style="left:949px;top:746px;color:#444;font-size:15.4px">14px</span>
<span class="t " style="left:1074px;top:746px;color:#444;font-size:15.4px">文本</span>
<!--SCROLL-->
<div class="abs" style="left:1565px;top:115px;width:17px;height:778px;background:#fafafa"></div>
<svg class="abs" style="left:1568px;top:121px;width:11px;height:6px" viewBox="0 0 11 6"><path d="M0 6 H11 L5.5 0 Z" fill="#8b8b8b"/></svg>
<div class="abs" style="left:1569px;top:135px;width:9px;height:415px;border-radius:5px;background:#8b8b8b"></div>
<svg class="abs" style="left:1568px;top:880px;width:11px;height:6px" viewBox="0 0 11 6"><path d="M0 0 H11 L5.5 6 Z" fill="#8b8b8b"/></svg>
</div>
</div>

<div class="abs" style="left:0;top:0;width:1920px;height:1px;background:rgba(255,255,255,.55);z-index:9"></div>
<div class="abs" style="left:0;top:913px;width:1920px;height:1px;background:#f1f7fc;z-index:9"></div>
</body>
</html>
